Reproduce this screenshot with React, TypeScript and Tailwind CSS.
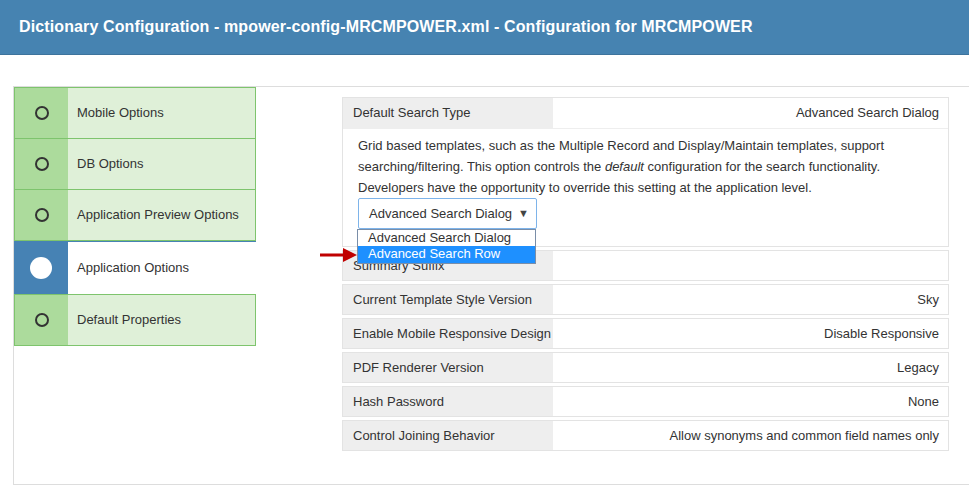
import React from 'react';

type NavItem = { label: string; active?: boolean };

const navItems: NavItem[] = [
  { label: 'Mobile Options' },
  { label: 'DB Options' },
  { label: 'Application Preview Options' },
  { label: 'Application Options', active: true },
  { label: 'Default Properties' },
];

const rows = [
  { label: 'Summary Suffix', value: '' },
  { label: 'Current Template Style Version', value: 'Sky' },
  { label: 'Enable Mobile Responsive Design', value: 'Disable Responsive' },
  { label: 'PDF Renderer Version', value: 'Legacy' },
  { label: 'Hash Password', value: 'None' },
  { label: 'Control Joining Behavior', value: 'Allow synonyms and common field names only' },
];

const NavRow: React.FC<{ item: NavItem; topBorder: boolean }> = ({ item, topBorder }) => {
  if (item.active) {
    return (
      <div className="flex h-[53px] border-t border-[#4682b4]">
        <div className="w-[54px] bg-[#4682b4] flex items-center justify-center">
          <div className="w-[22px] h-[22px] rounded-full bg-white" />
        </div>
        <div className="flex-1 bg-white flex items-center pl-[9px] text-[#333]">{item.label}</div>
      </div>
    );
  }
  return (
    <div
      className={`flex border-x border-b border-[#7ec46d] ${topBorder ? 'border-t h-[52px]' : 'h-[51px]'}`}
    >
      <div className="w-[53px] bg-[#acdb9c] flex items-center justify-center">
        <div className="w-[14px] h-[14px] rounded-full border-[2.5px] border-[#333]" />
      </div>
      <div className="flex-1 bg-[#dff0d8] flex items-center pl-[9px] text-[#333]">{item.label}</div>
    </div>
  );
};

const Row: React.FC<{ label: string; value: string }> = ({ label, value }) => (
  <div className="flex h-[31px] mt-[3px] border border-[#e3e3e3] bg-white">
    <div className="w-[210px] bg-[#eeeeee] flex items-center pl-[10px] whitespace-nowrap">{label}</div>
    <div className="flex-1 flex items-center justify-end pr-[9px]">{value}</div>
  </div>
);

export default function App() {
  return (
    <div className="w-[969px] h-[485px] overflow-hidden bg-white text-[13px] text-[#333] font-['Liberation_Sans',Arial,sans-serif]">
      {/* Header */}
      <div className="h-[55px] bg-[#4683b1] border-b border-[#3d739c] flex items-center px-[19px]">
        <h1 className="text-white font-bold text-[16px] tracking-[0.12px]">
          Dictionary Configuration - mpower-config-MRCMPOWER.xml - Configuration for MRCMPOWER
        </h1>
      </div>

      {/* Panel */}
      <div className="ml-[13px] mt-[31px] h-[399px] border-l border-t border-b border-[#dddddd] flex">
        <div className="w-[242px]">
          {navItems.map((item, i) => (
            <NavRow
              key={item.label}
              item={item}
              topBorder={i === 0 || !!navItems[i - 1]?.active}
            />
          ))}
        </div>

        <div className="ml-[86px] mt-[10px] w-[607px] relative">
          <div className="border border-[#e3e3e3]">
            <div className="flex h-[31px] border-b border-[#eeeeee]">
              <div className="w-[210px] bg-[#eeeeee] flex items-center pl-[10px]">Default Search Type</div>
              <div className="flex-1 flex items-center justify-end pr-[9px]">Advanced Search Dialog</div>
            </div>
            <div className="pl-[15px] pr-[10px] pt-[6px] pb-[17px] leading-[21px]">
              <p>
                Grid based templates, such as the Multiple Record and Display/Maintain templates, support
                searching/filtering. This option controls the <em>default</em> configuration for the search functionality.
                Developers have the opportunity to override this setting at the application level.
              </p>
              <div className="w-[179px] h-[31px] border border-[#7eb4ea] rounded-[2px] flex items-center justify-between pl-[10px] pr-[7px] bg-white">
                <span>Advanced Search Dialog</span>
                <span className="text-[11px] text-[#444] leading-none">▼</span>
              </div>
            </div>
          </div>

          {rows.map(r => (
            <Row key={r.label} label={r.label} value={r.value} />
          ))}

          {/* Open dropdown list */}
          <div className="absolute left-[15px] top-[132px] w-[179px] border border-[#7a8ea8] bg-white leading-[16px] text-[13px]">
            <div className="pl-[10px] h-[16px]">Advanced Search Dialog</div>
            <div className="pl-[10px] h-[17px] bg-[#1e90ff] text-white">Advanced Search Row</div>
          </div>

          {/* Pointer arrow */}
          <svg className="absolute left-[-22px] top-[151px]" width="37" height="14" viewBox="0 0 37 14">
            <rect x="0" y="5.5" width="26" height="3" fill="#c00000" />
            <polygon points="23,0 37,7 23,14" fill="#c00000" />
          </svg>
        </div>
      </div>
    </div>
  );
}
